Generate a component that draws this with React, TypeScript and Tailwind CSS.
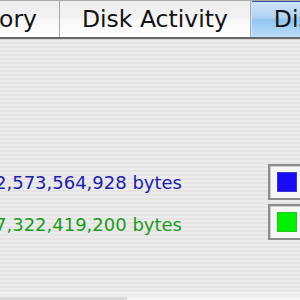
const tabFont = { fontFamily: '"DejaVu Sans", "Lucida Grande", sans-serif' };

function Tab({ label, active, className }: { label: string; active?: boolean; className?: string }) {
  return (
    <div
      className={
        "flex h-full shrink-0 items-center whitespace-nowrap px-[22px] pt-[1px] text-[23.5px] text-[#141414] " +
        (active
          ? "border-l border-[#c4ecff] bg-[linear-gradient(180deg,#cfe3f8_0%,#b3d3f3_45%,#92c4f2_52%,#b9ddfa_100%)] shadow-[inset_0_1px_0_#2d558f]"
          : "border-r border-[#a8a8a8] bg-[linear-gradient(180deg,#efefef_0%,#f1f1f1_45%,#f8f8f8_55%,#ffffff_100%)]") +
        " " +
        (className ?? "")
      }
    >
      {label}
    </div>
  );
}

function ColorWell({ color }: { color: string }) {
  return (
    <div className="-mr-[6px] h-[36px] w-[38px] shrink-0 border-2 border-[#8c8c8c] bg-[#f6f6f6] pl-[7px] pt-[6px] shadow-[inset_1px_1px_0_#cfcfcf]">
      <div className={"h-[20px] w-[20px] " + color} />
    </div>
  );
}

export default function App() {
  return (
    <div className="flex h-[300px] w-[300px] flex-col overflow-hidden bg-[#ececec]" style={tabFont}>
      {/* tab strip */}
      <div className="flex h-[40px] shrink-0 flex-col">
        <div className="flex h-[37px] border-t border-[#a9a9a9]">
          <Tab label="System Memory" className="w-[60px] justify-end overflow-hidden" />
          <Tab label="Disk Activity" />
          <Tab label="Disk Usage" active />
        </div>
        <div className="h-[2px] bg-[#676767]" />
        <div className="h-[1px] bg-[#d6d6d6]" />
      </div>

      {/* disk usage panel */}
      <div className="flex flex-1 flex-col gap-[4px] bg-[image:repeating-linear-gradient(180deg,#ececec_0px,#ececec_2px,#e4e4e4_2px,#e4e4e4_4px)] pt-[124px]">
        <div className="flex items-center">
          <span className="-ml-[5px] flex-1 whitespace-nowrap text-[18px] text-[#2020a8]">2,573,564,928 bytes</span>
          <ColorWell color="bg-[#1a0cf6] shadow-[inset_0_0_0_1px_#3a36c8]" />
        </div>
        <div className="flex items-center">
          <span className="-ml-[5px] flex-1 whitespace-nowrap pt-[4px] text-[18px] text-[#1c9a1c]">7,322,419,200 bytes</span>
          <ColorWell color="bg-[#00f000] shadow-[inset_0_0_0_1px_#22c422]" />
        </div>
      </div>

      {/* bottom edge */}
      <div className="flex h-[8px] shrink-0 flex-col">
        <div className="h-[1px] bg-[#f7f7f7]" />
        <div className="h-[4px] bg-[#ededed]" />
        <div className="flex h-[3px]">
          <div className="w-[127px] bg-[#d9d9d9]" />
          <div className="flex-1 bg-[#f5f5f5]" />
        </div>
      </div>
    </div>
  );
}
